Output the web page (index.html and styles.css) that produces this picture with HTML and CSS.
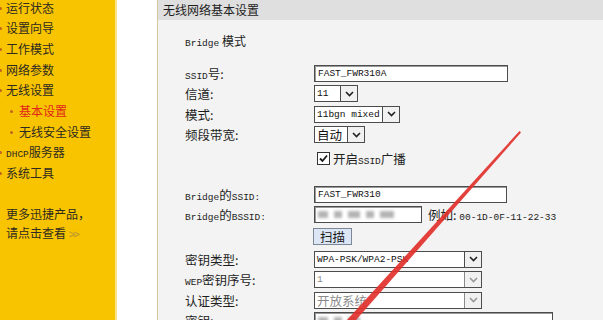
FILE: index.html
```html
<!DOCTYPE html>
<html>
<head>
<meta charset="utf-8">
<link rel="stylesheet" href="styles.css">
</head>
<body>
<div class="page">
  <nav class="side">
    <ul class="menu">
      <li class="item">运行状态</li>
      <li class="item">设置向导</li>
      <li class="item">工作模式</li>
      <li class="item">网络参数</li>
      <li class="item">无线设置</li>
      <li class="item sub active">基本设置</li>
      <li class="item sub">无线安全设置</li>
      <li class="item"><span class="m">DHCP</span>服务器</li>
      <li class="item">系统工具</li>
    </ul>
    <p class="more">更多迅捷产品，<br>请点击查看 <span class="gt">&gt;&gt;</span></p>
  </nav>
  <div class="gap"></div>
  <section class="panel">
    <div class="panel-title">无线网络基本设置</div>
    <div class="panel-body">
      <div class="heading"><span class="m">Bridge</span> 模式</div>

      <div class="row">
        <span class="lbl"><span class="m">SSID</span>号:</span>
        <span class="input w-ssid"><span class="m val">FAST_FWR310A</span></span>
      </div>
      <div class="row">
        <span class="lbl">信道:</span>
        <span class="sel w-ch"><span class="sel-text m">11</span><span class="sel-btn"><svg width="9" height="6" viewBox="0 0 9 6"><polyline points="1,1 4.5,4.5 8,1" fill="none" stroke="#222" stroke-width="1.6"/></svg></span></span>
      </div>
      <div class="row">
        <span class="lbl">模式:</span>
        <span class="sel w-mode"><span class="sel-text m">11bgn mixed</span><span class="sel-btn"><svg width="9" height="6" viewBox="0 0 9 6"><polyline points="1,1 4.5,4.5 8,1" fill="none" stroke="#222" stroke-width="1.6"/></svg></span></span>
      </div>
      <div class="row">
        <span class="lbl">频段带宽:</span>
        <span class="sel w-bw"><span class="sel-text cjk">自动</span><span class="sel-btn"><svg width="9" height="6" viewBox="0 0 9 6"><polyline points="1,1 4.5,4.5 8,1" fill="none" stroke="#222" stroke-width="1.6"/></svg></span></span>
      </div>
      <div class="row row-check">
        <span class="lbl"></span>
        <span class="check"><svg width="11" height="11" viewBox="0 0 11 11"><polyline points="2,5.5 4.5,8 9,2.5" fill="none" stroke="#1a1a1a" stroke-width="1.8"/></svg></span>
        <span class="check-text">开启<span class="m">SSID</span>广播</span>
      </div>

      <div class="row row-sep">
        <span class="lbl"><span class="m">Bridge</span>的<span class="m">SSID:</span></span>
        <span class="input w-bssid-name"><span class="m val">FAST_FWR310</span></span>
      </div>
      <div class="row">
        <span class="lbl"><span class="m">Bridge</span>的<span class="m">BSSID:</span></span>
        <span class="input w-mac"><span class="blur"><i class="b1"></i><i class="b2"></i><i class="b3"></i><i class="b4"></i><i class="b5"></i></span></span>
        <span class="hint">例如: <span class="m">00-1D-0F-11-22-33</span></span>
      </div>
      <div class="row row-btn">
        <span class="lbl"></span>
        <span class="btn">扫描</span>
      </div>
      <div class="row">
        <span class="lbl">密钥类型:</span>
        <span class="sel w-long"><span class="sel-text m">WPA-PSK/WPA2-PSK</span><span class="sel-btn"><svg width="9" height="6" viewBox="0 0 9 6"><polyline points="1,1 4.5,4.5 8,1" fill="none" stroke="#222" stroke-width="1.6"/></svg></span></span>
      </div>
      <div class="row">
        <span class="lbl"><span class="m">WEP</span>密钥序号:</span>
        <span class="sel w-long dis"><span class="sel-text m">1</span><span class="sel-btn"><svg width="9" height="6" viewBox="0 0 9 6"><polyline points="1,1 4.5,4.5 8,1" fill="none" stroke="#999" stroke-width="1.6"/></svg></span></span>
      </div>
      <div class="row">
        <span class="lbl">认证类型:</span>
        <span class="sel w-long dis"><span class="sel-text cjk">开放系统</span><span class="sel-btn"><svg width="9" height="6" viewBox="0 0 9 6"><polyline points="1,1 4.5,4.5 8,1" fill="none" stroke="#999" stroke-width="1.6"/></svg></span></span>
      </div>
      <div class="row">
        <span class="lbl">密钥:</span>
        <span class="input w-key"><span class="blur"><i class="b1"></i><i class="b2"></i><i class="b3"></i></span></span>
      </div>
    </div>
  </section>
  <svg class="arrow" width="603" height="320" viewBox="0 0 603 320">
    <polygon points="519.5,131 521,132.5 356,320 347,320" fill="#e2302b" opacity="0.92"/>
  </svg>
</div>
</body>
</html>
```

FILE: styles.css
```css
html, body {
  margin: 0;
  padding: 0;
  background: #ffffff;
  overflow: hidden;
}

body {
  font-family: "Noto Sans CJK SC", "Liberation Sans", sans-serif;
  color: #222222;
}

.page {
  position: relative;
  display: flex;
  width: 603px;
  height: 320px;
  overflow: hidden;
}

.m {
  font-family: "Liberation Mono", "Noto Sans CJK SC", monospace;
  font-size: 9.5px;
}

.cjk {
  font-family: "Noto Sans CJK SC", sans-serif;
}

/* Sidebar */
.side {
  flex: none;
  width: 115px;
  background: #f8c400;
  border-right: 2px solid #fbe28f;
}

.menu {
  list-style: none;
  margin: -2.5px 0 0;
  padding: 0;
}

.item {
  position: relative;
  height: 20.7px;
  line-height: 20.7px;
  padding-left: 6px;
  font-size: 12px;
  color: #2e2a20;
  white-space: nowrap;
}

.item::before {
  content: "";
  position: absolute;
  left: -1px;
  top: 9px;
  width: 3px;
  height: 3px;
  border-radius: 50%;
  background: #c0661c;
}

.item.sub {
  padding-left: 19px;
}

.item.sub::before {
  left: 10px;
}

.item.active {
  color: #e0261a;
}

.more {
  margin: 20.5px 0 0;
  padding-left: 6px;
  font-size: 12px;
  line-height: 19px;
  color: #2e2a20;
}

.gt {
  font-family: "Liberation Mono", monospace;
  font-size: 11px;
  color: #b49238;
  letter-spacing: -2px;
}

.gap {
  flex: none;
  width: 40px;
}

/* Panel */
.panel {
  flex: 1;
  background: #f3f3f3;
  border-left: 1px solid #d6c6a2;
}

.panel-title {
  height: 20px;
  line-height: 20px;
  padding-left: 5px;
  background: #dfdfdf;
  font-size: 12px;
  color: #1e1e1e;
}

.panel-body {
  padding: 10px 0 0 27px;
}

.heading {
  height: 21px;
  line-height: 21px;
  font-size: 12px;
  margin-bottom: 11.75px;
  color: #222;
}

.row {
  display: flex;
  align-items: center;
  height: 20.5px;
  white-space: nowrap;
}

.row-check {
  margin-top: 3px;
}

.row-sep {
  margin-top: 15.5px;
}

.row-btn {
  height: 24px;
}

.lbl {
  flex: none;
  width: 129px;
  font-size: 12.5px;
  color: #1e1e1e;
}

.lbl .m {
  font-size: 9.5px;
}

/* Inputs */
.input {
  box-sizing: border-box;
  display: flex;
  align-items: center;
  height: 17px;
  padding-left: 3px;
  background: #ffffff;
  border: 1px solid #4c4c4c;
  box-shadow: inset 1px 1px 0 #9a9a9a;
}

.val {
  color: #111;
}

.w-ssid { width: 194px; }
.w-bssid-name { width: 193px; }
.w-mac { width: 108px; }
.w-key { width: 239px; }

.blur {
  display: flex;
  gap: 6px;
  align-items: center;
  filter: blur(1.4px);
}

.blur i {
  display: block;
  height: 7px;
  background: #b4b4b4;
}

.blur .b1 { width: 10px; }
.blur .b2 { width: 8px; }
.blur .b3 { width: 12px; }
.blur .b4 { width: 8px; }
.blur .b5 { width: 14px; }

.hint {
  margin-left: 6px;
  font-size: 12.5px;
  color: #222;
}

/* Selects */
.sel {
  box-sizing: border-box;
  display: flex;
  height: 17px;
  background: #ffffff;
  border: 1px solid #4c4c4c;
}

.sel-text {
  flex: 1;
  display: flex;
  align-items: center;
  padding-left: 2px;
  color: #111;
  font-size: 9.5px;
}

.sel-text.cjk {
  font-size: 12.5px;
}

.sel-btn {
  flex: none;
  width: 16px;
  display: flex;
  align-items: center;
  justify-content: center;
  background: #f1f1f1;
  border-left: 1px solid #4c4c4c;
}

.w-ch { width: 44px; }
.w-mode { width: 86px; }
.w-bw { width: 51px; }
.w-long { width: 168px; }

.dis .sel-text {
  color: #8a8a8a;
}

.dis .sel-btn {
  border-left-color: #8a8a8a;
}

/* Checkbox */
.check {
  box-sizing: border-box;
  flex: none;
  display: flex;
  align-items: center;
  justify-content: center;
  width: 13px;
  height: 13px;
  margin-left: 3px;
  background: #ffffff;
  border: 1px solid #333;
}

.check-text {
  margin-left: 3px;
  font-size: 12.5px;
  color: #222;
}

/* Button */
.btn {
  box-sizing: border-box;
  display: flex;
  align-items: center;
  justify-content: center;
  width: 39px;
  height: 17px;
  margin-left: -1px;
  background: #dce6f4;
  border: 1px solid #7b8797;
  font-size: 12.5px;
  color: #1a1a1a;
}

/* Annotation overlay */
.arrow {
  position: absolute;
  left: 0;
  top: 0;
  pointer-events: none;
}
```
